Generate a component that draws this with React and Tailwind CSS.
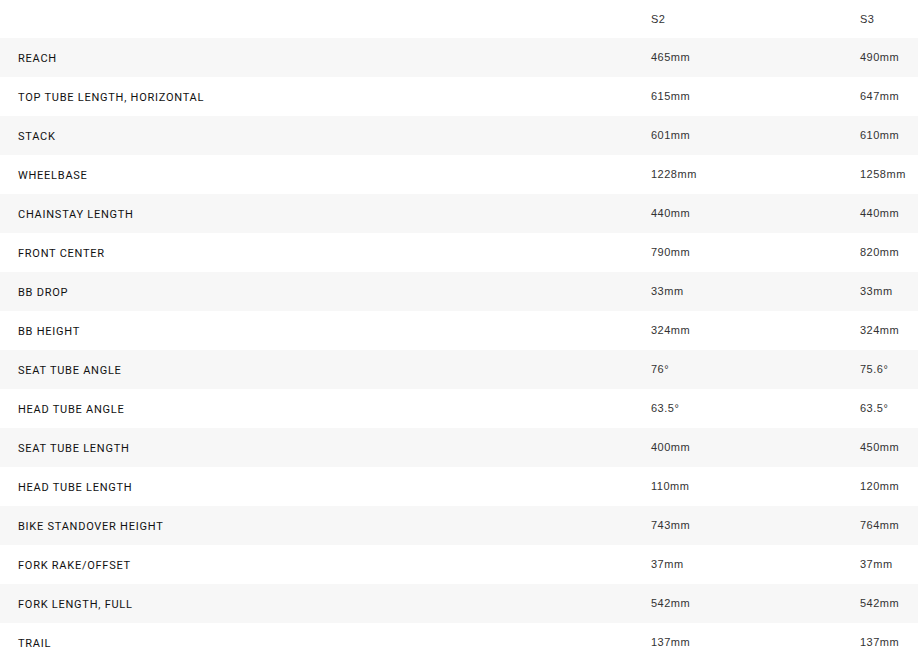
const rows = [
  ["REACH", "465mm", "490mm"],
  ["TOP TUBE LENGTH, HORIZONTAL", "615mm", "647mm"],
  ["STACK", "601mm", "610mm"],
  ["WHEELBASE", "1228mm", "1258mm"],
  ["CHAINSTAY LENGTH", "440mm", "440mm"],
  ["FRONT CENTER", "790mm", "820mm"],
  ["BB DROP", "33mm", "33mm"],
  ["BB HEIGHT", "324mm", "324mm"],
  ["SEAT TUBE ANGLE", "76°", "75.6°"],
  ["HEAD TUBE ANGLE", "63.5°", "63.5°"],
  ["SEAT TUBE LENGTH", "400mm", "450mm"],
  ["HEAD TUBE LENGTH", "110mm", "120mm"],
  ["BIKE STANDOVER HEIGHT", "743mm", "764mm"],
  ["FORK RAKE/OFFSET", "37mm", "37mm"],
  ["FORK LENGTH, FULL", "542mm", "542mm"],
  ["TRAIL", "137mm", "137mm"],
];

export default function App() {
  return (
    <div className="w-[918px] h-[657px] overflow-hidden bg-white">
      <div className="grid grid-cols-[633px_209px_76px] h-[38px] items-center text-[11px] text-[#333] tracking-[0.5px] font-['Liberation_Sans',Arial,sans-serif]">
        <div />
        <div className="pl-[18px]">S2</div>
        <div className="pl-[18px]">S3</div>
      </div>
      {rows.map((r, i) => (
        <div
          key={r[0]}
          className={`grid grid-cols-[633px_209px_76px] h-[39px] items-center ${i % 2 === 0 ? "bg-[#f7f7f7]" : "bg-white"}`}
        >
          <div className="pl-[18px] pt-[4px] text-[11px] font-normal tracking-[0.75px] text-[#111] font-['Roboto',sans-serif] whitespace-nowrap">
            {r[0]}
          </div>
          <div className="pl-[18px] text-[11px] tracking-[0.5px] text-[#333] font-['Liberation_Sans',Arial,sans-serif] whitespace-nowrap">
            {r[1]}
          </div>
          <div className="pl-[18px] text-[11px] tracking-[0.5px] text-[#333] font-['Liberation_Sans',Arial,sans-serif] whitespace-nowrap">
            {r[2]}
          </div>
        </div>
      ))}
    </div>
  );
}
